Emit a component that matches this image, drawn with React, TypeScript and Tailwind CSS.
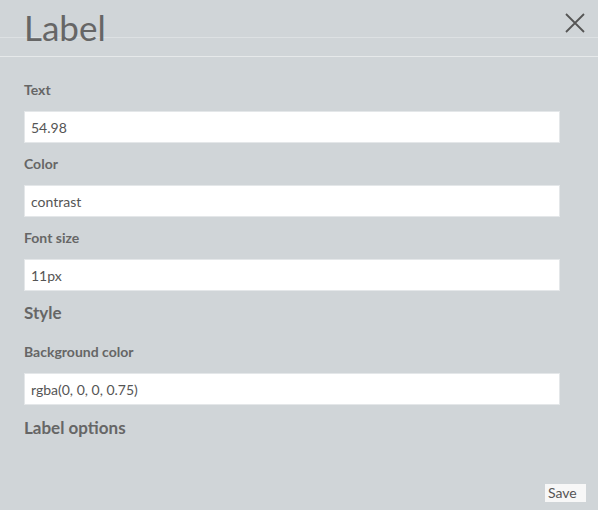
import React from 'react';

const font = { fontFamily: 'Lato, "Noto Sans", sans-serif' };

function Field({ label, value }: { label: string; value: string }) {
  return (
    <div className="mb-[11px]">
      <div className="text-[14px] leading-[20px] font-bold text-[#666] mb-[11px]">{label}</div>
      <div className="h-[32px] w-[536px] bg-white border border-[#e4e7e9] flex items-center pl-[6px] text-[14px] text-[#555]">
        {value}
      </div>
    </div>
  );
}

function Section({ title }: { title: string }) {
  return <div className="text-[17px] leading-[24px] font-bold text-[#666] mb-[17px]">{title}</div>;
}

export default function App() {
  return (
    <div style={font} className="w-[598px] h-[510px] bg-[#d0d5d8] flex flex-col overflow-hidden">
      {/* Header */}
      <div className="relative h-[57px] border-b border-[#e6e9ea] shrink-0">
        <div className="absolute left-0 right-0 top-[37px] h-px bg-[#dde1e3]" />
        <h1 className="relative pl-[24px] pt-[10px] text-[35px] leading-none text-[#666] font-normal">Label</h1>
        <button className="absolute right-[12px] top-[12px] w-[22px] h-[22px] flex items-center justify-center">
          <svg width="22" height="22" viewBox="0 0 22 22" fill="none" stroke="#555" strokeWidth="1.8">
            <path d="M2 2 L20 20 M20 2 L2 20" />
          </svg>
        </button>
      </div>

      {/* Body */}
      <div className="px-[24px] pt-[23px]">
        <Field label="Text" value="54.98" />
        <Field label="Color" value="contrast" />
        <div className="-mb-px">
          <Field label="Font size" value="11px" />
        </div>
        <Section title="Style" />
        <Field label="Background color" value="rgba(0, 0, 0, 0.75)" />
        <Section title="Label options" />
      </div>

      <div className="flex-1" />

      {/* Footer */}
      <div className="flex justify-end pr-[12px] pb-[8px]">
        <button className="h-[18px] w-[41px] bg-[#f7f7f7] text-[14px] leading-[18px] text-[#555] text-left pl-[3px]">Save</button>
      </div>
    </div>
  );
}
